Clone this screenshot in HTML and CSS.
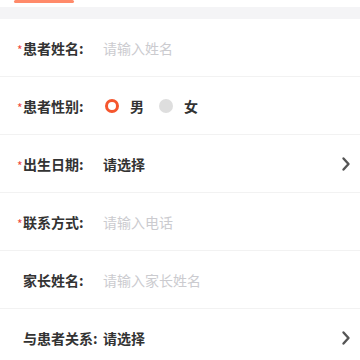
FILE: index.html
```html
<!DOCTYPE html>
<html lang="zh-CN">
<head>
    <meta charset="UTF-8">
    <meta name="viewport" content="width=device-width, initial-scale=1.0">
    <title>患者信息</title>
    <link rel="stylesheet" href="styles.css">
</head>
<body>
    <div class="tabs">
        <div class="tab-line"></div>
    </div>
    <div class="gap-band"></div>

    <div class="form">
        <div class="row">
            <span class="star">*</span>
            <span class="label">患者姓名:</span>
            <span class="placeholder">请输入姓名</span>
        </div>
        <div class="row">
            <span class="star">*</span>
            <span class="label">患者性别:</span>
            <div class="radios">
                <span class="radio on"></span>
                <span class="radio-text">男</span>
                <span class="radio off"></span>
                <span class="radio-text">女</span>
            </div>
        </div>
        <div class="row">
            <span class="star">*</span>
            <span class="label">出生日期:</span>
            <span class="value">请选择</span>
            <svg class="arrow" width="10" height="16" viewBox="0 0 10 16">
                <path d="M2.5 2.5 L7.5 8 L2.5 13.5" fill="none" stroke="#555" stroke-width="2.4" stroke-linecap="round" stroke-linejoin="round"/>
            </svg>
        </div>
        <div class="row">
            <span class="star">*</span>
            <span class="label">联系方式:</span>
            <span class="placeholder">请输入电话</span>
        </div>
        <div class="row">
            <span class="star hidden">*</span>
            <span class="label">家长姓名:</span>
            <span class="placeholder">请输入家长姓名</span>
        </div>
        <div class="row">
            <span class="star hidden">*</span>
            <span class="label">与患者关系:</span>
            <span class="value">请选择</span>
            <svg class="arrow" width="10" height="16" viewBox="0 0 10 16">
                <path d="M2.5 2.5 L7.5 8 L2.5 13.5" fill="none" stroke="#555" stroke-width="2.4" stroke-linecap="round" stroke-linejoin="round"/>
            </svg>
        </div>
    </div>
</body>
</html>
```

FILE: styles.css
```css
* {
    margin: 0;
    padding: 0;
    box-sizing: border-box;
}

body {
    font-family: "Noto Sans CJK SC", "Noto Sans", sans-serif;
    background: #fff;
    color: #333;
    font-size: 14px;
}

.tabs {
    height: 7px;
    padding-left: 14px;
}

.tab-line {
    width: 60px;
    height: 3px;
    border-radius: 2px;
    background: #ff8a6a;
}

.gap-band {
    height: 12px;
    background: #f4f4f6;
}

.row {
    display: flex;
    align-items: center;
    height: 58px;
    padding: 0 9px 0 17px;
    border-bottom: 1px solid #f2f2f2;
}

.star {
    width: 6px;
    color: #f04a3e;
    font-size: 12px;
    line-height: 1;
    margin-top: 5px;
}

.star.hidden {
    visibility: hidden;
}

.label {
    width: 80px;
    font-weight: bold;
    color: #333;
}

.placeholder {
    color: #cbcbcf;
}

.value {
    font-weight: bold;
    color: #333;
}

.arrow {
    margin-left: auto;
}

.radios {
    display: flex;
    align-items: center;
    padding-left: 2px;
}

.radio {
    width: 14px;
    height: 14px;
    border-radius: 50%;
}

.radio.on {
    border: 3px solid #f5562e;
}

.radio.off {
    background: #dedede;
    margin-left: 15px;
}

.radio-text {
    margin-left: 11px;
    font-weight: bold;
}
```
